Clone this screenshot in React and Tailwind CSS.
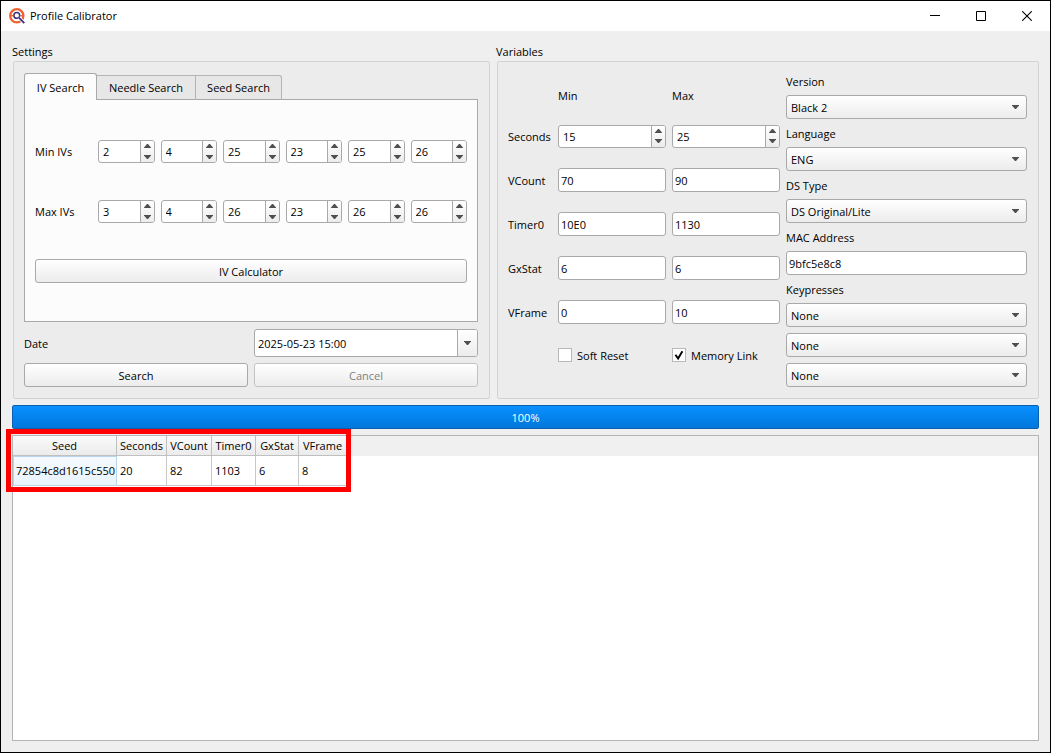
import React, { useId, useState } from "react";

const field =
  "rounded-[3px] border border-[#a9a9a9] bg-white text-black outline-none";
const raised =
  "rounded-[3px] border border-[#a9a9a9] bg-linear-to-b from-white to-[#ececec]";

function Triangle({ up = false }) {
  return (
    <svg width="7" height="4" viewBox="0 0 7 4" fill="#4f4f4f" aria-hidden="true">
      {up ? <path d="M0 4 L0 3.4 L3 0 H4 L7 3.4 V4 Z" /> : <path d="M0 0 H7 V0.6 L4 4 H3 L0 0.6 Z" />}
    </svg>
  );
}

function SpinBox({ label, initial }) {
  const [value, setValue] = useState(initial);
  return (
    <div className={`${field} flex h-[23px] min-w-0 overflow-hidden`}>
      <input
        type="number"
        aria-label={label}
        value={value}
        onChange={(e) => setValue(Number(e.target.value))}
        className="min-w-0 flex-1 bg-transparent pt-px pl-1 outline-none [appearance:textfield] [&::-webkit-inner-spin-button]:appearance-none"
      />
      <div className="flex w-[14px] shrink-0 flex-col border-l border-[#a9a9a9] bg-linear-to-b from-white to-[#ececec]">
        <button
          type="button"
          aria-label={`Increase ${label}`}
          onClick={() => setValue(value + 1)}
          className="flex flex-1 items-center justify-center"
        >
          <Triangle up />
        </button>
        <button
          type="button"
          aria-label={`Decrease ${label}`}
          onClick={() => setValue(value - 1)}
          className="flex flex-1 items-center justify-center"
        >
          <Triangle />
        </button>
      </div>
    </div>
  );
}

function TextBox({ id, label, initial }) {
  const [value, setValue] = useState(initial);
  return (
    <input
      id={id}
      type="text"
      aria-label={label}
      value={value}
      onChange={(e) => setValue(e.target.value)}
      className={`${field} h-6 w-full min-w-0 px-[2px] pt-px`}
    />
  );
}

function ComboBox({ id, label, options }) {
  return (
    <div className="relative">
      <select id={id} aria-label={label} className={`${raised} h-6 w-full appearance-none px-1 pt-px outline-none`}>
        {options.map((o) => (
          <option key={o}>{o}</option>
        ))}
      </select>
      <span className="pointer-events-none absolute inset-y-0 right-2 flex items-center">
        <Triangle />
      </span>
    </div>
  );
}

function Labelled({ text, children }) {
  const id = useId();
  return (
    <>
      <label htmlFor={id} className="h-4 leading-[18px]">
        {text}
      </label>
      {children(id)}
    </>
  );
}

function PushButton({ children, disabled = false }) {
  return (
    <button
      type="button"
      disabled={disabled}
      className={`${raised} h-6 w-full pt-px disabled:border-[#c3c3c3] disabled:text-[#7f7f7f]`}
    >
      {children}
    </button>
  );
}

function Check({ label, initial }) {
  const [on, setOn] = useState(initial);
  return (
    <label className="flex items-center gap-[5px]">
      <span className="relative flex h-[14px] w-[14px]">
        <input
          type="checkbox"
          checked={on}
          onChange={() => setOn(!on)}
          className="h-[14px] w-[14px] appearance-none border border-[#b9b9b9] bg-white"
        />
        {on && (
          <svg
            viewBox="0 0 14 14"
            className="pointer-events-none absolute inset-0 h-[14px] w-[14px]"
            fill="none"
            stroke="#000"
            strokeWidth="1.9"
            aria-hidden="true"
          >
            <path d="M3.4 6.8 L6.1 10.6 L10.4 3.2" />
          </svg>
        )}
      </span>
      <span className="pt-px">{label}</span>
    </label>
  );
}

function TitleBar() {
  return (
    <header className="flex h-[30px] items-center bg-white pl-2">
      <svg width="16" height="16" viewBox="0 0 16 16" fill="none" aria-hidden="true">
        <circle cx="7.8" cy="7.8" r="6.6" stroke="#f0612f" strokeWidth="2.3" />
        <path d="M1 7.8 H4 M11.6 7.8 H14.6" stroke="#f0612f" strokeWidth="1.4" />
        <circle cx="7.8" cy="7.4" r="2.9" fill="#fff" stroke="#3b3183" strokeWidth="1.5" />
        <path d="M9.9 9.6 L15.3 15.1" stroke="#fff" strokeWidth="3.4" />
        <path d="M9.9 9.6 L15.3 15.1" stroke="#3b3183" strokeWidth="1.8" />
      </svg>
      <h1 className="ml-[5px] flex-1">Profile Calibrator</h1>
      <div className="flex h-full">
        <button type="button" aria-label="Minimize" className="flex w-[46px] items-center justify-center">
          <svg width="10" height="10" viewBox="0 0 10 10" aria-hidden="true">
            <path d="M0 4.5 H10" stroke="#000" />
          </svg>
        </button>
        <button type="button" aria-label="Maximize" className="flex w-[46px] items-center justify-center">
          <svg width="10" height="10" viewBox="0 0 10 10" fill="none" aria-hidden="true">
            <path d="M0.5 0.5 H9.5 V9.5 H0.5 Z" stroke="#000" />
          </svg>
        </button>
        <button type="button" aria-label="Close" className="flex w-[46px] items-center justify-center">
          <svg width="10" height="10" viewBox="0 0 10 10" fill="none" aria-hidden="true">
            <path d="M0.2 0.2 L9.8 9.8 M9.8 0.2 L0.2 9.8" stroke="#000" strokeWidth="1.1" />
          </svg>
        </button>
      </div>
    </header>
  );
}

function IvRow({ label, values }) {
  return (
    <div className="grid grid-cols-[57px_repeat(6,minmax(0,1fr))] items-center gap-x-[6px]">
      <span className="pt-px">{label}</span>
      {values.map((v, i) => (
        <SpinBox key={i} label={`${label} ${i + 1}`} initial={v} />
      ))}
    </div>
  );
}

function Settings() {
  return (
    <section className="flex flex-col">
      <h2 className="h-[19px] leading-5">Settings</h2>
      <div className="ml-px flex flex-1 flex-col rounded-xs border border-[#d3d3d3] bg-[#ececec] pt-[11px] pr-[11px] pb-[11px] pl-[10px]">
        <div role="tablist" className="z-10 -mb-px flex items-end">
          <button
            type="button"
            role="tab"
            aria-selected="true"
            className="h-[27px] w-[73px] rounded-t-[3px] border border-b-0 border-[#a9a9a9] bg-[#fcfcfc] pt-px"
          >
            IV Search
          </button>
          <button
            type="button"
            role="tab"
            aria-selected="false"
            className="h-[25px] w-[99px] border border-l-0 border-[#b4b4b4] border-b-[#a9a9a9] bg-[#e7e7e7] pt-px"
          >
            Needle Search
          </button>
          <button
            type="button"
            role="tab"
            aria-selected="false"
            className="h-[25px] w-[86px] rounded-tr-[3px] border border-l-0 border-[#b4b4b4] border-b-[#a9a9a9] bg-[#e7e7e7] pt-px"
          >
            Seed Search
          </button>
        </div>
        <div role="tabpanel" className="flex flex-1 flex-col border border-[#a9a9a9] bg-[#fcfcfc] px-[10px] pt-10 pb-[38px]">
          <IvRow label="Min IVs" values={[2, 4, 25, 23, 25, 26]} />
          <div className="h-[37px]" />
          <IvRow label="Max IVs" values={[3, 4, 26, 23, 26, 26]} />
          <div className="h-9" />
          <PushButton>IV Calculator</PushButton>
        </div>
        <div className="mt-[7px] grid grid-cols-2 items-center gap-[6px]">
          <label htmlFor="date" className="pt-px">Date</label>
          <div className={`${field} flex h-7 overflow-hidden`}>
            <input
              id="date"
              type="text"
              defaultValue="2025-05-23 15:00"
              className="min-w-0 flex-1 bg-transparent pt-px pl-[3px] outline-none"
            />
            <button
              type="button"
              aria-label="Open calendar"
              className="flex w-5 items-center justify-center border-l border-[#a9a9a9] bg-linear-to-b from-white to-[#ececec]"
            >
              <Triangle />
            </button>
          </div>
          <PushButton>Search</PushButton>
          <PushButton disabled>Cancel</PushButton>
        </div>
      </div>
    </section>
  );
}

const ranges = [
  ["Seconds", 15, 25],
  ["VCount", "70", "90"],
  ["Timer0", "10E0", "1130"],
  ["GxStat", "6", "6"],
  ["VFrame", "0", "10"],
];

function Variables() {
  const row = "grid grid-cols-[44px_minmax(0,1fr)_minmax(0,1fr)] items-center gap-x-[6px]";
  return (
    <section className="flex flex-col">
      <h2 className="h-[19px] leading-5">Variables</h2>
      <div className="ml-px grid flex-1 grid-cols-[272fr_241fr] gap-x-[6px] rounded-xs border border-[#d3d3d3] bg-[#ececec] pr-[11px] pl-[10px]">
        <div className="pt-4">
          <div className={`${row} h-9`}>
            <span />
            <span>Min</span>
            <span>Max</span>
          </div>
          {ranges.map(([name, min, max]) => {
            const Box = typeof min === "number" ? SpinBox : TextBox;
            return (
              <div key={name} className={`${row} h-11`}>
                <span className="pt-px">{name}</span>
                <Box label={`${name} min`} initial={min} />
                <Box label={`${name} max`} initial={max} />
              </div>
            );
          })}
          <div className={`${row} h-[42px]`}>
            <span />
            <Check label="Soft Reset" initial={false} />
            <Check label="Memory Link" initial={true} />
          </div>
        </div>
        <div className="flex flex-col gap-[6px] py-[11px]">
          <Labelled text="Version">{(id) => <ComboBox id={id} options={["Black 2", "White 2", "Black", "White"]} />}</Labelled>
          <Labelled text="Language">{(id) => <ComboBox id={id} options={["ENG", "FRE", "GER", "ITA", "JPN", "KOR", "SPA"]} />}</Labelled>
          <Labelled text="DS Type">{(id) => <ComboBox id={id} options={["DS Original/Lite", "DSi", "3DS"]} />}</Labelled>
          <Labelled text="MAC Address">{(id) => <TextBox id={id} initial="9bfc5e8c8" />}</Labelled>
          <Labelled text="Keypresses">{(id) => <ComboBox id={id} options={["None", "A", "B"]} />}</Labelled>
          <ComboBox label="Second keypress" options={["None", "A", "B"]} />
          <ComboBox label="Third keypress" options={["None", "A", "B"]} />
        </div>
      </div>
    </section>
  );
}

const columns = [
  ["Seed", "72854c8d1615c550"],
  ["Seconds", "20"],
  ["VCount", "82"],
  ["Timer0", "1103"],
  ["GxStat", "6"],
  ["VFrame", "8"],
];

function Results() {
  return (
    <div className="relative flex-1 border border-[#b4b4b4] bg-white">
      <div className="bg-linear-to-b from-[#f0f0f0] from-[20px] to-white to-[20px]">
        <table className="w-[334px] table-fixed border-separate border-spacing-0">
          <colgroup>
            <col className="w-[104px]" />
            <col className="w-[50px]" />
            <col className="w-[45px]" />
            <col className="w-[44px]" />
            <col className="w-[43px]" />
            <col className="w-[48px]" />
          </colgroup>
          <thead>
            <tr className="h-5">
              {columns.map(([name]) => (
                <th
                  key={name}
                  className="border-r border-b border-[#c0c0c0] bg-linear-to-b from-[#fafafa] to-[#ebebeb] p-0 pt-px text-center font-normal"
                >
                  {name}
                </th>
              ))}
            </tr>
          </thead>
          <tbody>
            <tr className="h-[30px]">
              {columns.map(([name, value], i) => (
                <td
                  key={name}
                  className={
                    i === 0
                      ? "border border-[#b9d5ea] bg-linear-to-b from-[#f5fafe] to-[#e8f3fc] p-0 pl-[2px]"
                      : "border-r border-b border-[#c8c8c8] p-0 pl-[3px]"
                  }
                >
                  {value}
                </td>
              ))}
            </tr>
          </tbody>
        </table>
      </div>
      <div className="pointer-events-none absolute -top-[7px] -left-[7px] h-[63px] w-[345px] border-[5px] border-[#ff0000]" />
    </div>
  );
}

export default function App() {
  return (
    <div className="flex min-h-screen flex-col border border-black bg-[#efefef] font-['Open_Sans',sans-serif] text-[11px] leading-4 text-black">
      <TitleBar />
      <main className="flex flex-1 flex-col gap-[6px] p-[11px]">
        <div className="grid grid-cols-[478fr_543fr] gap-[6px]">
          <Settings />
          <Variables />
        </div>
        <div
          role="progressbar"
          aria-valuenow={100}
          aria-valuemin={0}
          aria-valuemax={100}
          aria-label="Search progress"
          className="flex h-6 items-center justify-center rounded-[2px] border border-[#0a5fae] bg-linear-to-b from-[#0a90ff] to-[#0077dc] pt-px text-white"
        >
          100%
        </div>
        <Results />
      </main>
    </div>
  );
}
